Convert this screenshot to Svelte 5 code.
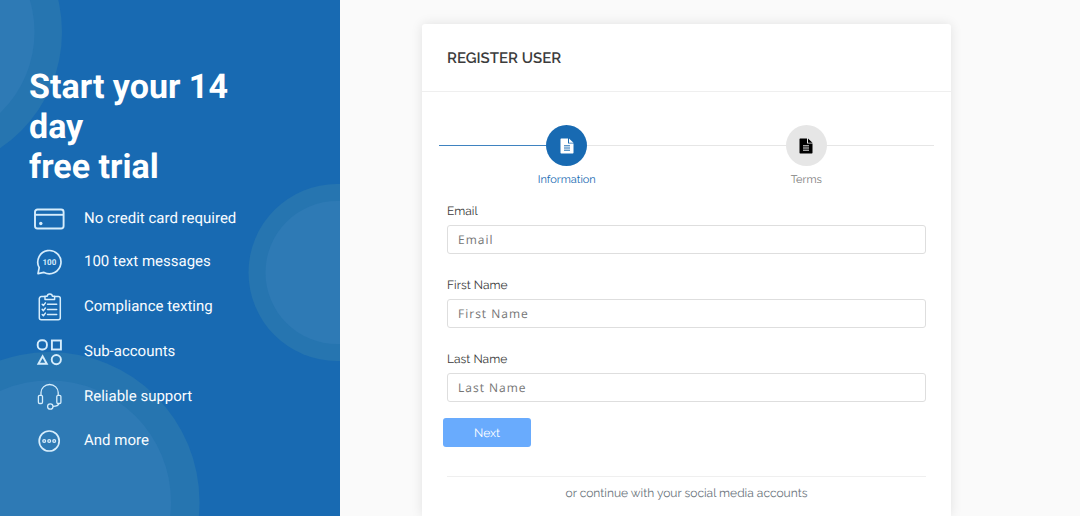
<script>
  const features = [
    { icon: 'card', label: 'No credit card required' },
    { icon: 'messages', label: '100 text messages' },
    { icon: 'compliance', label: 'Compliance texting' },
    { icon: 'shapes', label: 'Sub-accounts' },
    { icon: 'support', label: 'Reliable support' },
    { icon: 'more', label: 'And more' }
  ];
  const steps = [
    { label: 'Information', active: true },
    { label: 'Terms', active: false }
  ];
  let fields = $state([
    { id: 'email', label: 'Email', type: 'email', value: '' },
    { id: 'first-name', label: 'First Name', type: 'text', value: '' },
    { id: 'last-name', label: 'Last Name', type: 'text', value: '' }
  ]);
</script>

<div class="page">
  <aside class="promo">
    <svg class="rings" width="340" height="516" viewBox="0 0 340 516" aria-hidden="true">
      <g fill="#2675b0">
        <circle cx="-78" cy="32" r="140" />
        <circle cx="337" cy="272.5" r="88.5" />
        <circle cx="49.5" cy="502" r="150" />
      </g>
      <g fill="#2e7ab5">
        <circle cx="-78" cy="32" r="112.5" />
        <circle cx="337" cy="272.5" r="71.5" />
        <circle cx="49.5" cy="502" r="121.5" />
      </g>
    </svg>

    <h1>Start your 14 day<br />free trial</h1>

    <ul class="features">
      {#each features as f}
        <li>
          {#if f.icon === 'card'}
            <svg width="32" height="22" viewBox="0 0 32 22" stroke-width="1.9">
              <rect x="2" y="1.5" width="28.6" height="19" rx="2.5" />
              <path d="M2 6.8h28.6" />
              <circle cx="7.8" cy="15.5" r="1.7" fill="currentColor" stroke="none" />
            </svg>
          {:else if f.icon === 'messages'}
            <svg width="32" height="26" viewBox="0 0 32 26" stroke-width="1.7">
              <path d="M5 24.6L6.2 18.7A11.6 11.6 0 1 1 11 23.4Z" stroke-linejoin="round" />
              <text x="16.4" y="15.8" text-anchor="middle">100</text>
            </svg>
          {:else if f.icon === 'compliance'}
            <svg width="32" height="26" viewBox="0 0 32 26" stroke-width="1.5" stroke-linecap="round" stroke-linejoin="round">
              <path d="M11.8 2.6H8.3a2 2 0 0 0-2 2v19.2a2 2 0 0 0 2 2h17a2 2 0 0 0 2-2V4.6a2 2 0 0 0-2-2h-3.5" />
              <path d="M12 5.4V2.2h2.2c.2-3 5-3 5.2 0h2.2v3.2z" />
              <path d="M14.5 10.3h9.2M14.5 15.4h9.2M14.5 20.5h9.2" />
              <path d="M9.2 10.3l1.2 1.2 2-2.6M9.2 15.4l1.2 1.2 2-2.6M9.2 20.5l1.2 1.2 2-2.6" />
            </svg>
          {:else if f.icon === 'shapes'}
            <svg width="32" height="26" viewBox="0 0 32 26" stroke-width="1.9">
              <rect x="4.7" y="1.3" width="9.2" height="9.2" rx="4" />
              <rect x="18.9" y="1.5" width="9" height="9" />
              <path d="M9.6 17.2l4.2 7.6H5.4z" />
              <circle cx="23.3" cy="20.6" r="4.6" />
            </svg>
          {:else if f.icon === 'support'}
            <svg width="32" height="26" viewBox="0 0 32 26" stroke-width="1.3">
              <path d="M8 11.2V8.6a8.6 8.1 0 0 1 17.2 0v2.6" />
              <rect x="5.4" y="11.3" width="4.1" height="8.2" rx="1.3" />
              <rect x="23.8" y="11.3" width="4.1" height="8.2" rx="1.3" />
              <circle cx="17.3" cy="22.5" r="2.7" />
              <path d="M20 22.3c3.4 0 5.4-.8 5.8-2.8" />
            </svg>
          {:else}
            <svg width="32" height="24" viewBox="0 0 32 24" stroke-width="1.7">
              <circle cx="16.2" cy="12" r="10" />
              <g stroke-width="1.3">
                <circle cx="11.2" cy="12" r="1.4" />
                <circle cx="16.2" cy="12" r="1.4" />
                <circle cx="21.2" cy="12" r="1.4" />
              </g>
            </svg>
          {/if}
          <span>{f.label}</span>
        </li>
      {/each}
    </ul>
  </aside>

  <main>
    <section class="card">
      <header><h2>REGISTER USER</h2></header>
      <div class="body">
        <ol class="steps">
          {#each steps as s}
            <li class:active={s.active}>
              <div class="track">
                <span class="line"></span>
                <span class="dot">
                  <svg width="14" height="16" viewBox="0 0 14 16" aria-hidden="true">
                    <path fill="currentColor" d="M1.2.5H8v5h5.5v9.3a.7.7 0 0 1-.7.7H1.2a.7.7 0 0 1-.7-.7V1.2A.7.7 0 0 1 1.2.5z" />
                    <path fill="currentColor" d="M9 .5l4.5 4.2H9z" />
                    <path class="rule" d="M4 7.8h6M4 10h6M4 12.2h6" />
                  </svg>
                </span>
                <span class="line"></span>
              </div>
              <span class="name">{s.label}</span>
            </li>
          {/each}
        </ol>

        <form onsubmit={(e) => e.preventDefault()}>
          {#each fields as field}
            <div class="field">
              <label for={field.id}>{field.label}</label>
              <input id={field.id} type={field.type} placeholder={field.label} bind:value={field.value} />
            </div>
          {/each}
          <button type="submit">Next</button>
        </form>

        <p class="social">or continue with your social media accounts</p>
      </div>
    </section>
  </main>
</div>

<style>
  :global(body) {
    margin: 0;
    background: #fafafa;
  }

  .page {
    display: grid;
    grid-template-columns: 340px 1fr;
    min-height: 100vh;
    font-family: Raleway, Lato, sans-serif;
    font-size: 12px;
    line-height: 18px;
    color: #3c3c3c;
    text-rendering: geometricPrecision;
  }

  .promo {
    position: relative;
    box-sizing: border-box;
    overflow: hidden;
    padding: 67px 80px 24px 29px;
    background: #186ab2;
    color: #fff;
    font-family: Roboto, sans-serif;
  }
  .rings {
    position: absolute;
    left: 0;
    top: 0;
  }
  h1 {
    position: relative;
    margin: 0;
    font-size: 34px;
    line-height: 40px;
    font-weight: 700;
  }
  .features {
    position: relative;
    display: flex;
    flex-direction: column;
    gap: 19px;
    margin: 21px 0 0;
    padding: 0 0 0 4px;
    list-style: none;
    font-size: 15px;
    color: #f8fcff;
  }
  .features li {
    display: flex;
    align-items: center;
    gap: 19px;
  }
  .features span {
    white-space: nowrap;
    padding-bottom: 3px;
  }
  .features svg {
    flex: none;
    overflow: visible;
    fill: none;
    stroke: currentColor;
    color: #d6edfc;
  }
  .features text {
    fill: currentColor;
    stroke: none;
    font-size: 8px;
    font-weight: 700;
  }

  main {
    display: grid;
    grid-template-columns: 82fr 529fr 129fr;
    padding-top: 24px;
  }
  .card {
    grid-column: 2;
    min-width: 0;
    background: #fff;
    border-radius: 3px 3px 0 0;
    box-shadow: 0 0 12px rgba(0, 0, 0, 0.1);
  }
  header {
    padding: 25px 25px 23px;
    border-bottom: 1px solid #efefef;
  }
  h2 {
    margin: 0;
    font-size: 15px;
    line-height: 19px;
    font-weight: 600;
  }
  .body {
    padding: 33px 25px 14px;
  }

  .steps {
    display: flex;
    margin: 0 0 13px;
    padding: 0;
    list-style: none;
  }
  .steps li {
    flex: 1;
    text-align: center;
    color: #7c7c7c;
  }
  .track {
    display: grid;
    grid-template-columns: 1fr 41px 1fr;
    align-items: center;
    margin-bottom: 5px;
  }
  .line {
    height: 1px;
    background: #e6e6e6;
  }
  .active .line:first-child {
    background: #3f83c0;
  }
  .steps li:first-child .line:first-child {
    margin-left: -8px;
  }
  .steps li:last-child .line:last-child {
    margin-right: -8px;
  }
  .dot {
    display: grid;
    place-items: center;
    height: 41px;
    border-radius: 50%;
    background: #e6e6e6;
    color: #000;
  }
  .active .dot {
    background: #186ab2;
    color: #fff;
  }
  .rule {
    fill: none;
    stroke: #e6e6e6;
    stroke-width: 1;
  }
  .active .rule {
    stroke: #186ab2;
  }
  .name {
    display: block;
    font-size: 11px;
  }
  .active .name {
    color: #186ab2;
  }

  .field {
    display: flex;
    flex-direction: column;
    gap: 5px;
    margin-bottom: 22px;
  }
  .field:last-of-type {
    margin-bottom: 16px;
  }
  input {
    box-sizing: border-box;
    width: 100%;
    height: 29px;
    padding: 0 10px;
    border: 1px solid #dedede;
    border-radius: 3px;
    background: #fff;
    font: 12px 'Open Sans', 'Noto Sans', sans-serif;
    letter-spacing: 1px;
    color: #3c3c3c;
    text-rendering: inherit;
  }
  input::placeholder {
    color: #757575;
    opacity: 1;
  }
  button {
    display: block;
    width: 88px;
    height: 29px;
    margin-left: -4px;
    padding: 0;
    border: 0;
    border-radius: 3px;
    background: #69abfd;
    color: #fff;
    font: inherit;
    text-rendering: inherit;
  }
  .social {
    margin: 29px 0 0;
    padding-top: 7px;
    border-top: 1px solid #efefef;
    text-align: center;
    color: #6c757d;
  }
</style>
